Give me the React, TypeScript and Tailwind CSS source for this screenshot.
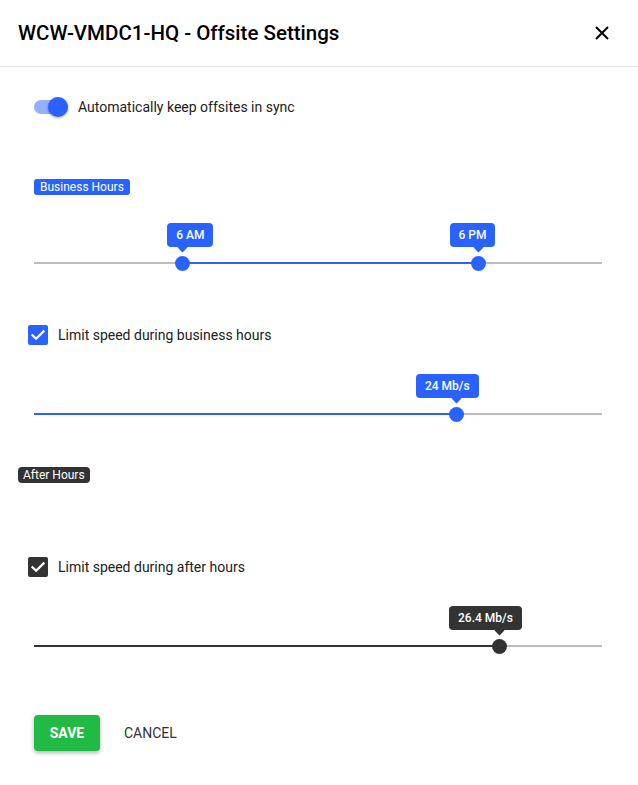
import React from "react";

type Thumb = { pct: number; label: string; boxOffset: number };

function Slider({
  thumbs,
  color,
  range,
}: {
  thumbs: Thumb[];
  color: string;
  range: [number, number];
}) {
  const isBlue = color === "blue";
  const bg = isBlue ? "bg-[#2962ff]" : "bg-[#333333]";
  return (
    <div className="relative ml-[34px] h-[16px] w-[568px]">
      <div className="absolute left-0 right-0 top-[7px] h-[2px] bg-[#bdbdbd]" />
      <div
        className={`absolute top-[7px] h-[2px] ${bg}`}
        style={{ left: `${range[0]}%`, width: `${range[1] - range[0]}%` }}
      />
      {thumbs.map((t, i) => (
        <div key={i} className="absolute top-0" style={{ left: `${t.pct}%` }}>
          <div className={`absolute left-[-7.5px] top-[0.5px] h-[15px] w-[15px] rounded-full ${bg}`} />
          <div className={`absolute top-[-11.5px] left-[-3.5px] h-[7px] w-[7px] rotate-45 ${bg}`} />
          <div
            className={`absolute top-[-32px] flex h-[24px] items-center whitespace-nowrap rounded-[4px] px-[9px] text-[12px] font-medium text-white ${bg}`}
            style={{ left: `${t.boxOffset}px` }}
          >
            {t.label}
          </div>
        </div>
      ))}
    </div>
  );
}

function Check({ dark }: { dark?: boolean }) {
  return (
    <div
      className={`flex h-[20px] w-[20px] items-center justify-center rounded-[2px] ${
        dark ? "bg-[#333333]" : "bg-[#2962ff]"
      }`}
    >
      <svg width="20" height="20" viewBox="0 0 20 20" fill="none">
        <path d="M4.5 10.2l3.6 3.6L15.5 6.4" stroke="white" strokeWidth="2.2" strokeLinecap="square" />
      </svg>
    </div>
  );
}

export default function App() {
  return (
    <div
      className="flex h-[785px] w-[638px] flex-col bg-white text-[#212121]"
      style={{ fontFamily: "Roboto, 'Noto Sans', sans-serif" }}
    >
      <div className="flex h-[67px] shrink-0 items-center justify-between border-b border-[#e0e0e0] pl-[18px] pr-[29px]">
        <div className="text-[20.5px] font-medium text-black">WCW-VMDC1-HQ - Offsite Settings</div>
        <svg width="14" height="14" viewBox="0 0 14 14" fill="none">
          <path d="M1 1L13 13M13 1L1 13" stroke="black" strokeWidth="2" />
        </svg>
      </div>

      <div className="mt-[30px] flex h-[20px] items-center pl-[34px]">
        <div className="relative h-[14px] w-[34px] rounded-full bg-[#94b0ff]">
          <div className="absolute right-0 top-[-3px] h-[20px] w-[20px] rounded-full bg-[#2962ff] shadow-[0_1px_3px_rgba(0,0,0,0.35)]" />
        </div>
        <span className="ml-[10px] text-[14px]">Automatically keep offsites in sync</span>
      </div>

      <div className="mt-[62px] flex pl-[34px]">
        <div className="flex h-[16px] items-center rounded-[3px] bg-[#2962ff] px-[6px] text-[12px] text-white">
          Business Hours
        </div>
      </div>

      <div className="mt-[60px] flex">
        <Slider
          color="blue"
          range={[(6 / 23) * 100, (18 / 23) * 100]}
          thumbs={[
            { pct: (6 / 23) * 100, label: "6 AM", boxOffset: -15 },
            { pct: (18 / 23) * 100, label: "6 PM", boxOffset: -29 },
          ]}
        />
      </div>

      <div className="mt-[54px] flex h-[20px] items-center pl-[28px]">
        <Check />
        <span className="ml-[10px] text-[14px]">Limit speed during business hours</span>
      </div>

      <div className="mt-[61px] flex">
        <Slider
          color="blue"
          range={[0, 74.47]}
          thumbs={[{ pct: 74.47, label: "24 Mb/s", boxOffset: -41 }]}
        />
      </div>

      <div className="mt-[45px] flex pl-[18px]">
        <div className="flex h-[16px] items-center rounded-[4px] bg-[#333333] px-[5px] text-[12px] text-white">
          After Hours
        </div>
      </div>

      <div className="mt-[74px] flex h-[20px] items-center pl-[28px]">
        <Check dark />
        <span className="ml-[10px] text-[14px]">Limit speed during after hours</span>
      </div>

      <div className="mt-[61px] flex">
        <Slider
          color="dark"
          range={[0, 82.04]}
          thumbs={[{ pct: 82.04, label: "26.4 Mb/s", boxOffset: -51 }]}
        />
      </div>

      <div className="mt-[61px] flex items-center pl-[34px]">
        <button className="h-[36px] w-[66px] rounded-[4px] bg-[#21ba45] text-[14px] font-bold text-white shadow-[0_2px_4px_rgba(0,0,0,0.3)]">
          SAVE
        </button>
        <button className="ml-[8px] h-[36px] px-[16px] text-[14px] font-normal text-[#333333]">
          CANCEL
        </button>
      </div>
    </div>
  );
}
